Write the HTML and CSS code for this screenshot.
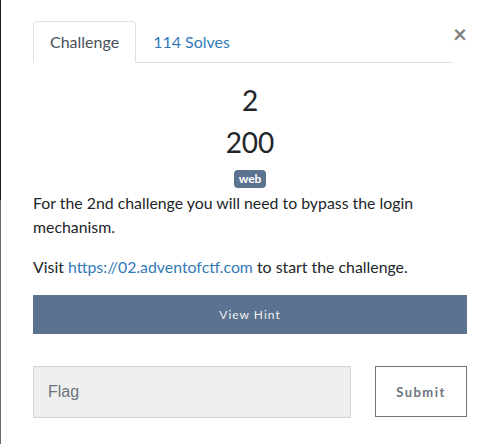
FILE: index.html
```html
<!DOCTYPE html>
<html lang="en">
<head>
<meta charset="utf-8">
<title>Challenge</title>
<link rel="stylesheet" href="styles.css">
</head>
<body>
<div class="modal">
  <div class="modal-body">
    <div class="tabs-row">
      <ul class="nav-tabs">
        <li class="tab active">Challenge</li>
        <li class="tab link">114 Solves</li>
      </ul>
      <button class="close" type="button">&times;</button>
    </div>
    <h2 class="name">2</h2>
    <h3 class="value">200</h3>
    <div class="tags"><span class="badge">web</span></div>
    <div class="desc">
      <p>For the 2nd challenge you will need to bypass the login mechanism.</p>
      <p>Visit <a href="#">https://02.adventofctf.com</a> to start the challenge.</p>
    </div>
    <button class="hint" type="button">View Hint</button>
    <div class="submit-row">
      <input class="flag" type="text" placeholder="Flag">
      <button class="submit" type="button">Submit</button>
    </div>
  </div>
</div>
</body>
</html>
```

FILE: styles.css
```css
html, body {
  margin: 0;
  padding: 0;
  height: 100%;
}
body {
  background: #fff linear-gradient(to bottom, #1c1f23 0, #1c1f23 200px, #6b6b6b 200px) no-repeat 0 0 / 1px 100%;
  font-family: Lato, "Liberation Sans", sans-serif;
  color: #212529;
}
.modal {
  margin-left: 1px;
}
.modal-body {
  padding: 21px 19px 0 32px;
}
.tabs-row {
  display: flex;
  align-items: flex-start;
}
.nav-tabs {
  flex: 1;
  display: flex;
  list-style: none;
  margin: 0;
  padding: 0;
  border-bottom: 1px solid #dee2e6;
}
.tab {
  padding: 8px 16px;
  font-size: 16px;
  line-height: 24px;
  border: 1px solid transparent;
  border-radius: 4px 4px 0 0;
  margin-bottom: -1px;
}
.tab.active {
  color: #495057;
  background: #fff;
  border-color: #dee2e6 #dee2e6 #fff;
}
.tab.link {
  color: #337ab7;
}
.close {
  width: 14px;
  margin-left: 0;
  padding: 0;
  border: 0;
  background: none;
  font-family: Lato, sans-serif;
  font-size: 24px;
  font-weight: 700;
  line-height: 24px;
  color: #000;
  opacity: .5;
  text-align: right;
  margin-top: 1px;
}
.name, .value {
  margin: 0;
  text-align: center;
  font-weight: 400;
  font-size: 28px;
  line-height: 34px;
}
.name {
  margin-top: 20px;
}
.value {
  margin-top: 8px;
}
.tags {
  text-align: center;
  line-height: 18px;
  margin-top: 11px;
}
.badge {
  display: inline-block;
  vertical-align: top;
  background: #5b7290;
  color: #fff;
  font-size: 12px;
  font-weight: 700;
  line-height: 12px;
  padding: 3px 5px 3px;
  border-radius: 4px;
}
.desc {
  margin-top: 3px;
  font-size: 15.85px;
  line-height: 24px;
}
.desc p {
  margin: 0 0 16px;
}
.desc a {
  color: #337ab7;
  text-decoration: none;
}
.hint {
  display: block;
  width: 100%;
  height: 39px;
  border: 0;
  border-radius: 0;
  background: #5b7290;
  color: #f0f0f0;
  font-family: Lato, sans-serif;
  font-size: 12px;
  letter-spacing: 1px;
  padding: 0;
}
.submit-row {
  display: grid;
  grid-template-columns: 1fr 92px;
  column-gap: 24px;
  margin-top: 32px;
}
.flag {
  box-sizing: border-box;
  height: 52px;
  margin: 0;
  padding: 0 14px;
  background: #efefef;
  border: 1px solid #ced4da;
  border-radius: 0;
  font-family: "Liberation Sans", Arial, sans-serif;
  font-size: 16px;
  color: #495057;
}
.flag::placeholder {
  color: #6c757d;
  opacity: 1;
}
.submit {
  box-sizing: border-box;
  height: 51px;
  margin: 0;
  background: #fff;
  border: 1px solid #6c757d;
  border-radius: 0;
  color: #6c757d;
  font-family: Lato, sans-serif;
  font-size: 13px;
  font-weight: 700;
  letter-spacing: 1.5px;
  padding: 0;
}
```
